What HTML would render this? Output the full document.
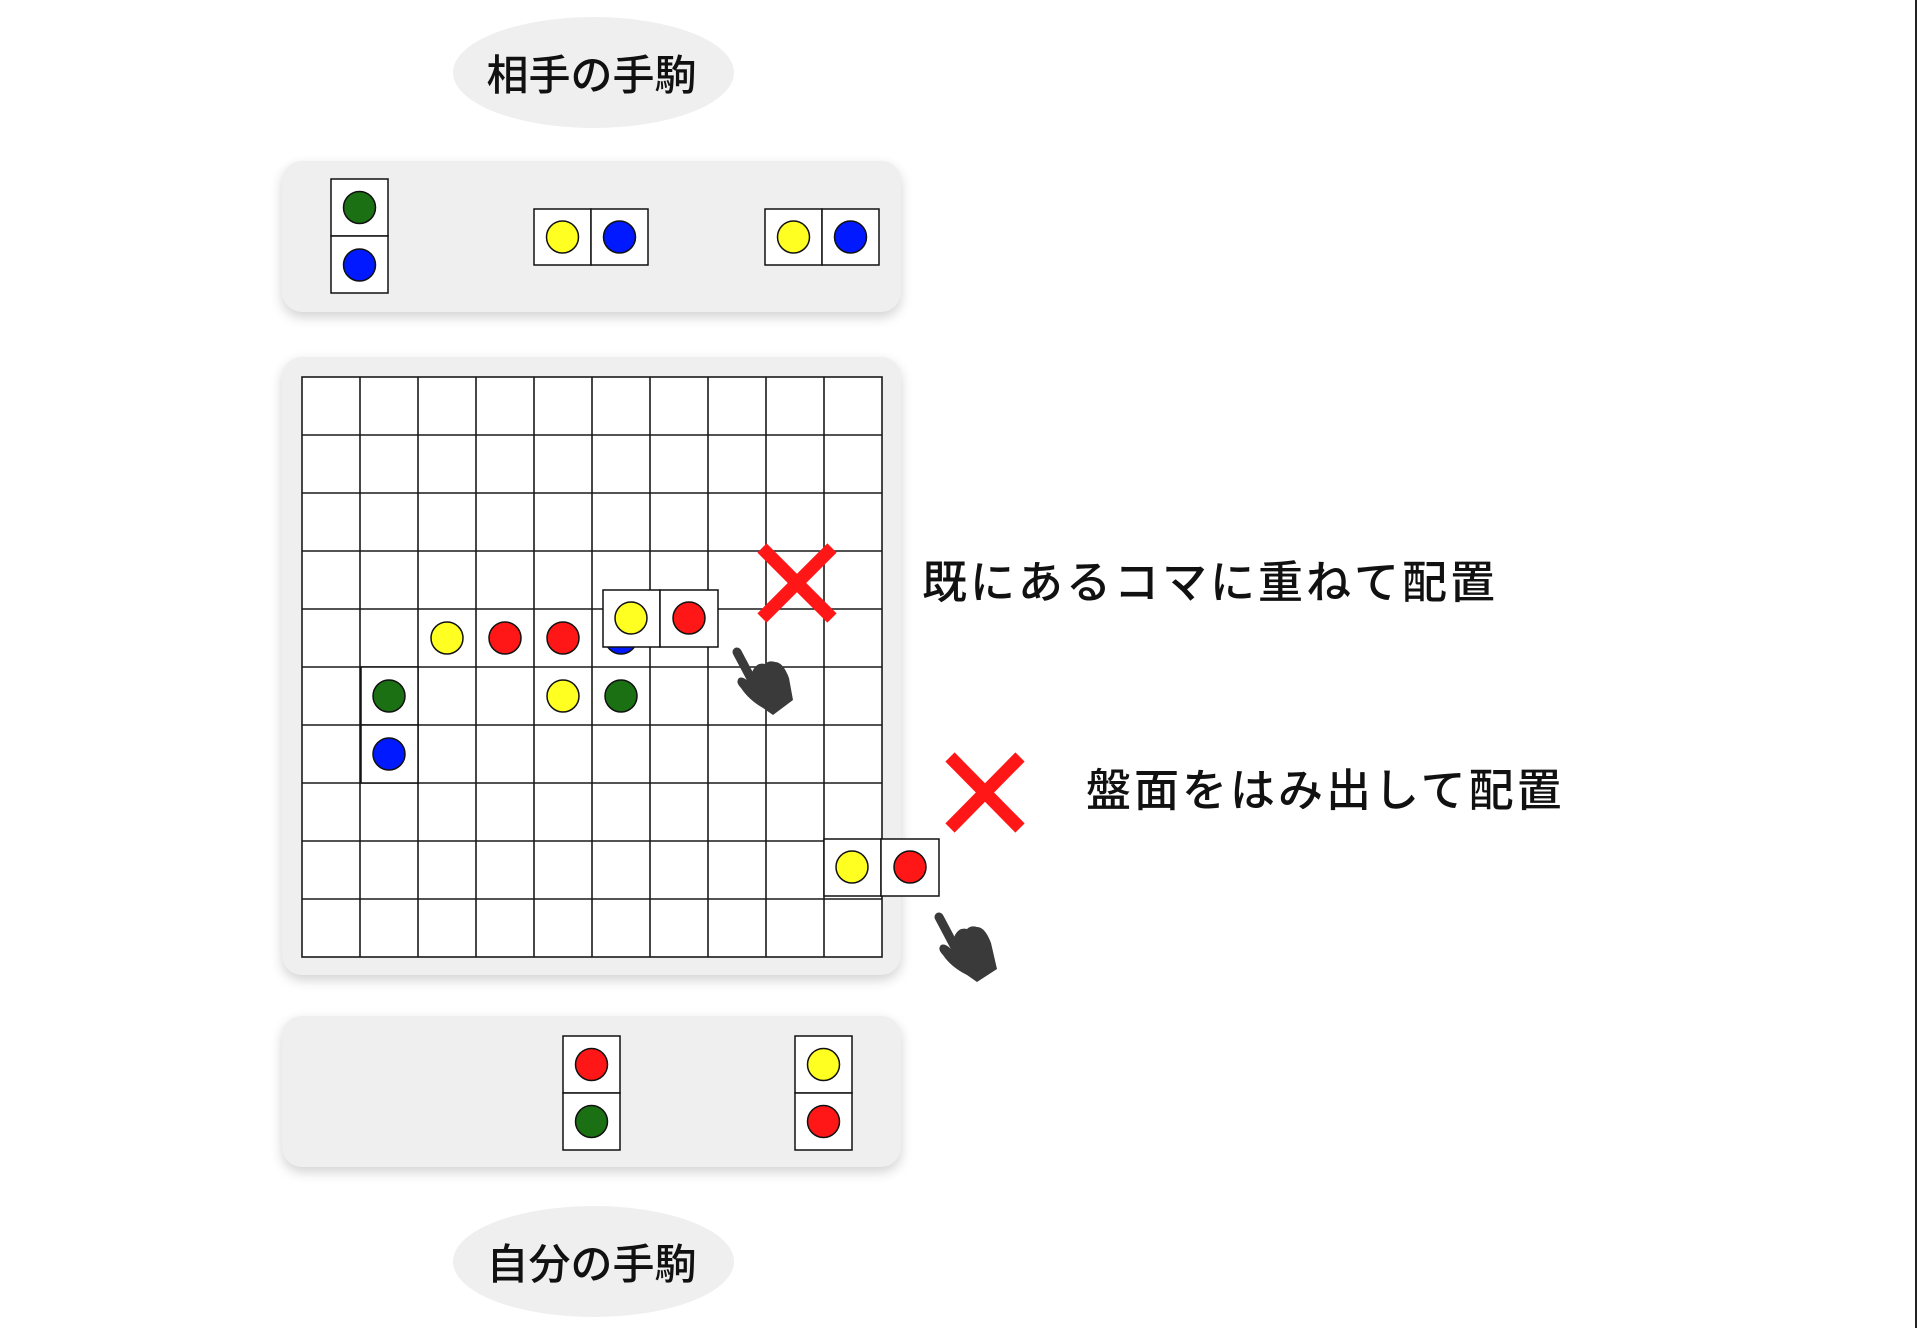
<!DOCTYPE html>
<html><head><meta charset="utf-8"><style>
*{margin:0;padding:0;box-sizing:border-box}
body{width:1920px;height:1328px;background:#fff;position:relative;overflow:hidden;font-family:"Liberation Sans","Noto Sans CJK JP",sans-serif;color:#111}
.abs{position:absolute}
.panel{position:absolute;background:#efefef;border-radius:20px;box-shadow:0 5px 12px rgba(0,0,0,.18)}
.ell{position:absolute;background:#efefef;border-radius:50%;display:flex;align-items:center;justify-content:center;font-size:42px;font-weight:500;padding-right:4px}
.txt{position:absolute;font-size:45px;letter-spacing:3px;line-height:1;white-space:nowrap;font-weight:500}
</style></head><body>
<div class="ell" style="left:453px;top:17px;width:281px;height:111px">相手の手駒</div>
<div class="ell" style="left:453px;top:1206px;width:281px;height:111px">自分の手駒</div>
<div class="panel" style="left:282px;top:161px;width:619px;height:151px"></div>
<div class="panel" style="left:282px;top:357px;width:619px;height:618px"></div>
<div class="panel" style="left:282px;top:1016px;width:619px;height:151px"></div>
<div class="abs" style="left:1915px;top:0;width:2px;height:1328px;background:#222"></div>
<svg class="abs" style="left:0;top:0" width="1920" height="1328">
<g stroke="#1a1a1a" stroke-width="1.6">
<rect x="302" y="377" width="580" height="580" fill="#fff"/>
<path d="M360 377V957M418 377V957M476 377V957M534 377V957M592 377V957M650 377V957M708 377V957M766 377V957M824 377V957M302 435H882M302 493H882M302 551H882M302 609H882M302 667H882M302 725H882M302 783H882M302 841H882M302 899H882"/>
</g>
<g stroke="#111" stroke-width="1.5">
<rect x="331" y="179" width="57" height="57" fill="#fff"/><rect x="331" y="236" width="57" height="57" fill="#fff"/>
<circle cx="359.5" cy="207.5" r="16" fill="#1a7012"/><circle cx="359.5" cy="265" r="16" fill="#0019ff"/>
<rect x="534" y="209" width="57" height="56" fill="#fff"/><rect x="591" y="209" width="57" height="56" fill="#fff"/>
<circle cx="562.5" cy="237" r="16" fill="#ffff22"/><circle cx="619.5" cy="237" r="16" fill="#0019ff"/>
<rect x="765" y="209" width="57" height="56" fill="#fff"/><rect x="822" y="209" width="57" height="56" fill="#fff"/>
<circle cx="793.5" cy="237" r="16" fill="#ffff22"/><circle cx="850.5" cy="237" r="16" fill="#0019ff"/>
<rect x="563" y="1036" width="57" height="57" fill="#fff"/><rect x="563" y="1093" width="57" height="57" fill="#fff"/>
<circle cx="591.5" cy="1064.5" r="16" fill="#ff1616"/><circle cx="591.5" cy="1121.5" r="16" fill="#1a7012"/>
<rect x="795" y="1036" width="57" height="57" fill="#fff"/><rect x="795" y="1093" width="57" height="57" fill="#fff"/>
<circle cx="823.5" cy="1064.5" r="16" fill="#ffff22"/><circle cx="823.5" cy="1121.5" r="16" fill="#ff1616"/>
<circle cx="447" cy="638" r="16" fill="#ffff22"/>
<circle cx="505" cy="638" r="16" fill="#ff1616"/>
<circle cx="563" cy="638" r="16" fill="#ff1616"/>
<circle cx="621" cy="638" r="16" fill="#0019ff"/>
<rect x="361" y="667" width="57" height="58" fill="#fff"/><rect x="361" y="725" width="57" height="58" fill="#fff"/>
<circle cx="389" cy="696" r="16" fill="#1a7012"/><circle cx="389" cy="754" r="16" fill="#0019ff"/>
<circle cx="563" cy="696" r="16" fill="#ffff22"/>
<circle cx="621" cy="696" r="16" fill="#1a7012"/>
<rect x="603" y="590" width="57" height="57" fill="#fff"/><rect x="660" y="590" width="58" height="57" fill="#fff"/>
<circle cx="631" cy="618" r="16" fill="#ffff22"/><circle cx="689" cy="618" r="16" fill="#ff1616"/>
<rect x="824" y="839" width="57" height="57" fill="#fff"/><rect x="881" y="839" width="58" height="57" fill="#fff"/>
<circle cx="852" cy="867" r="16" fill="#ffff22"/><circle cx="910" cy="867" r="16" fill="#ff1616"/>
</g>
<g stroke="#ff1616" stroke-width="13">
<path d="M762 548L832 618M832 548L762 618"/>
<path d="M950 757L1020 828M1020 757L950 828"/>
</g>
<g fill="#3a3a3a">
<g transform="translate(733,648)">
<path d="M4 4 L22 38" stroke="#3a3a3a" stroke-width="9" stroke-linecap="round"/>
<path d="M20 22 Q24 14 32 16 Q36 12 42 14 Q50 14 56 30 L60 52 L40 67 L30 60 Q16 52 8 40 Q2 34 6 30 Q10 28 16 34 Z"/>
</g>
<g transform="translate(935,913)">
<path d="M4 4 L22 38" stroke="#3a3a3a" stroke-width="9" stroke-linecap="round"/>
<path d="M20 22 Q24 14 32 16 Q36 12 42 14 Q50 14 56 30 L62 56 L42 69 L32 62 Q16 54 8 42 Q2 36 6 32 Q10 30 16 36 Z"/>
</g>
</g>
</svg>
<div class="txt" style="left:922px;top:560px">既にあるコマに重ねて配置</div>
<div class="txt" style="left:1086px;top:768px">盤面をはみ出して配置</div>
</body></html>
